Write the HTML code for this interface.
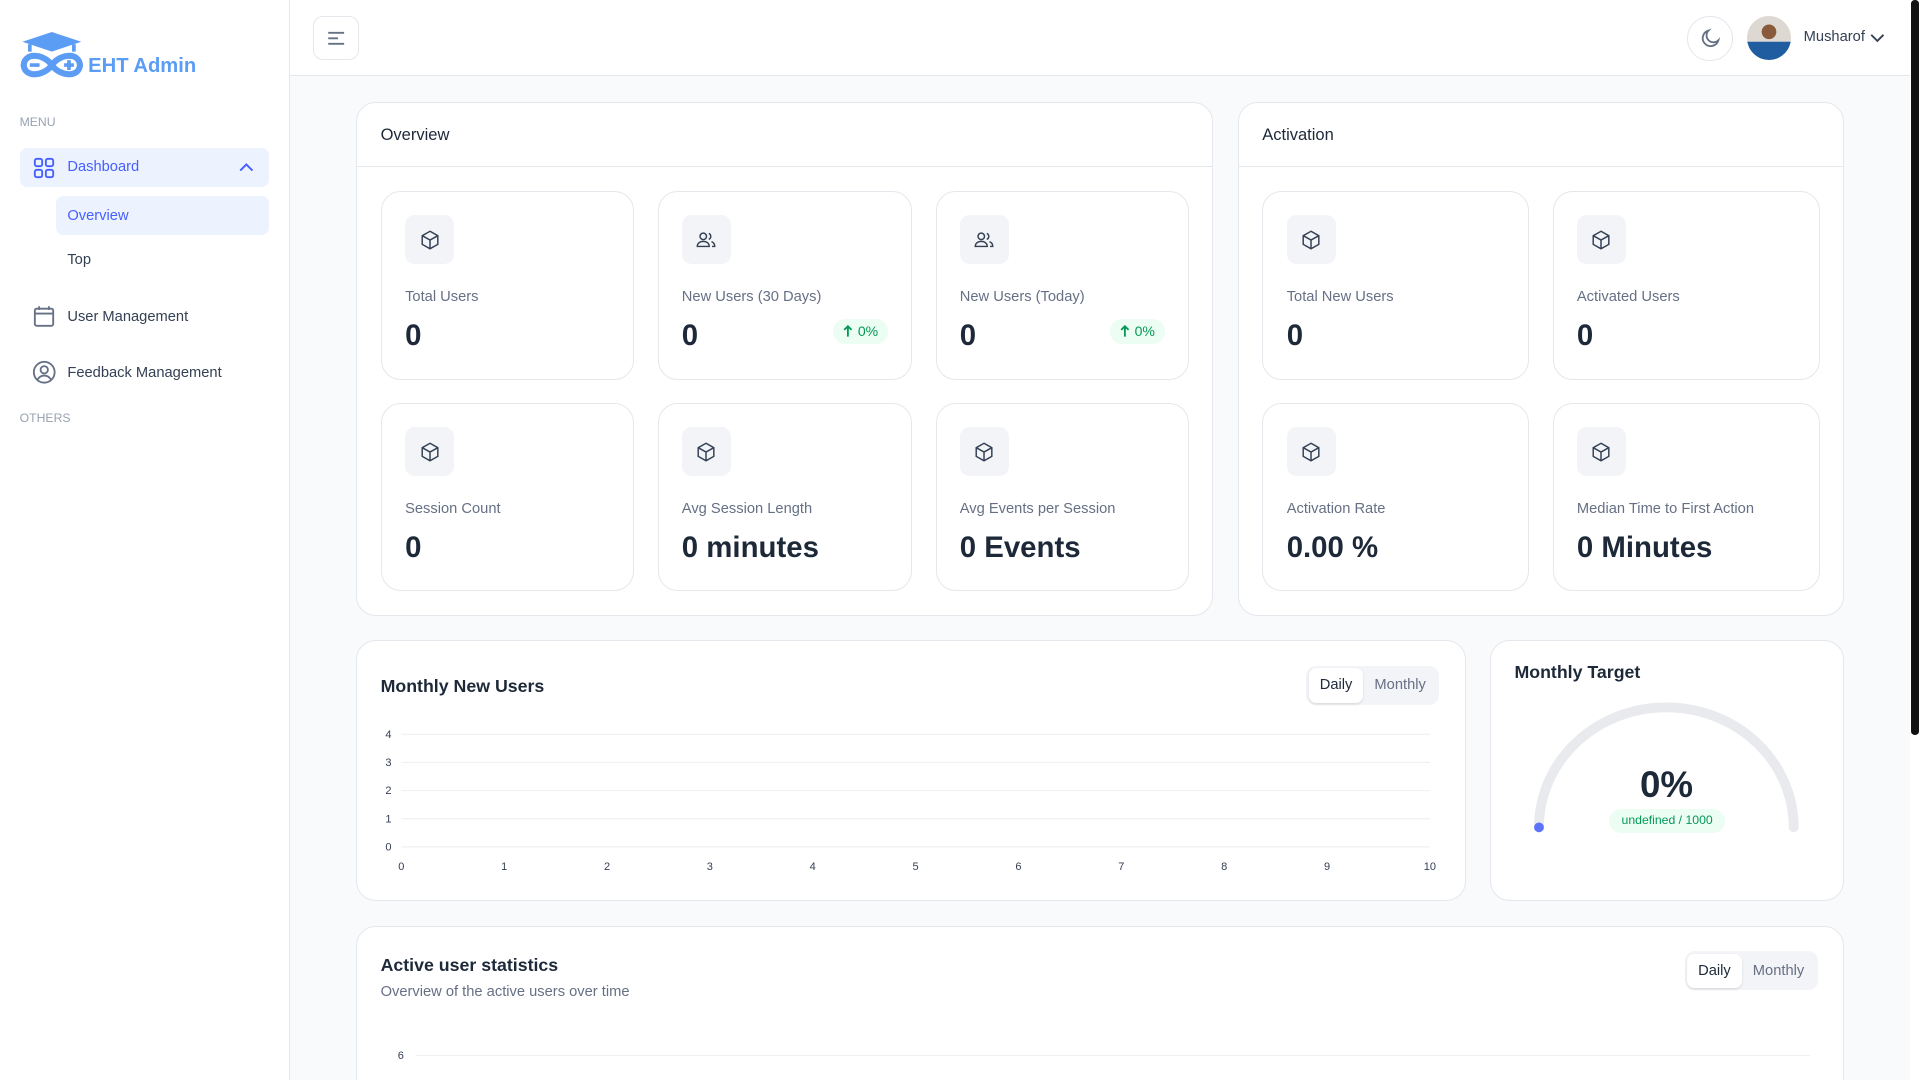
<!DOCTYPE html>
<html><head><meta charset="utf-8"><style>
*{box-sizing:border-box;margin:0;padding:0}
html,body{width:1920px;height:1080px;overflow:hidden;background:#f9fafb}
#r{zoom:1.2244898;width:1568px;height:882px;position:relative;font-family:"Liberation Sans",sans-serif;color:#344054;background:#f9fafb;overflow:hidden}
.a{position:absolute}
.sb{left:0;top:0;width:237px;height:882px;background:#fff;border-right:1px solid #e4e7ec}
.card{position:absolute;background:#fff;border:1px solid #e4e7ec;border-radius:16px}
.ic{position:absolute;left:19px;top:19px;width:40px;height:40px;border-radius:8px;background:#f2f4f7;display:flex;align-items:center;justify-content:center}
.lbl{position:absolute;left:19px;top:79px;font-size:12px;color:#667085}
.val{position:absolute;left:19px;top:104px;font-size:24px;font-weight:bold;color:#1d2939}
.bd{position:absolute;right:19px;top:104px;height:20px;padding:0 8px;border-radius:10px;background:#ecfdf3;color:#039855;font-size:11.5px;line-height:20px;display:flex;align-items:center;gap:4px}
.nav{position:absolute;font-size:12px;color:#344054}
.tg{position:absolute;height:32px;background:#f2f4f7;border-radius:8px;padding:2px;display:flex;font-size:12px}
.tg span{padding:0 9px;line-height:28px;color:#667085}
.tg span.on{background:#fff;color:#1d2939;border-radius:6px;box-shadow:0 1px 2px rgba(0,0,0,.1)}
</style></head><body><div id="r">
<div class="a sb">
 <svg class="a" style="left:16px;top:26px" width="52" height="42" viewBox="0 0 52 42">
  <polygon points="26,0 50,8 26,16 2,8" fill="#5b9cf5"/>
  <path d="M8 10v6 M44 10v6" stroke="#5b9cf5" stroke-width="3"/>
  <path d="M26 27 C20 18,4 16,3 27 C4 38,20 36,26 27 C32 18,48 16,49 27 C48 38,32 36,26 27Z" fill="none" stroke="#5b9cf5" stroke-width="5"/>
  <path d="M8 27h8 M36 27h8 M40 23v8" stroke="#5b9cf5" stroke-width="3"/>
 </svg>
 <div class="a" style="left:72px;top:45px;font-size:16.5px;font-weight:bold;color:#5b9cf5">EHT Admin</div>
 <div class="a" style="left:16px;top:94px;font-size:10px;color:#98a2b3">MENU</div>
 <div class="a" style="left:16px;top:121px;width:204px;height:32px;border-radius:6px;background:#ecf3ff"></div>
 <svg class="a" style="left:27px;top:128px" width="18" height="18" viewBox="0 0 18 18" fill="none" stroke="#465fff" stroke-width="1.5"><rect x="1.5" y="1.5" width="6" height="6" rx="1.5"/><rect x="10.5" y="1.5" width="6" height="6" rx="1.5"/><rect x="1.5" y="10.5" width="6" height="6" rx="1.5"/><rect x="10.5" y="10.5" width="6" height="6" rx="1.5"/></svg>
 <div class="nav" style="left:55px;top:130px;color:#465fff">Dashboard</div>
 <svg class="a" style="left:195px;top:132px" width="12" height="10" viewBox="0 0 12 10" fill="none" stroke="#465fff" stroke-width="1.6"><path d="M1 7l5-5 5 5"/></svg>
 <div class="a" style="left:46px;top:160px;width:174px;height:32px;border-radius:6px;background:#ecf3ff"></div>
 <div class="nav" style="left:55px;top:170px;color:#465fff">Overview</div>
 <div class="nav" style="left:55px;top:206px">Top</div>
 <svg class="a" style="left:27px;top:249px" width="18" height="18" viewBox="0 0 18 18" fill="none" stroke="#667085" stroke-width="1.5"><rect x="1.5" y="3" width="15" height="14" rx="1.5"/><path d="M1.5 7h15 M5 1v3 M13 1v3"/></svg>
 <div class="nav" style="left:55px;top:252px">User Management</div>
 <svg class="a" style="left:26px;top:294px" width="20" height="20" viewBox="0 0 20 20" fill="none" stroke="#667085" stroke-width="1.5"><circle cx="10" cy="10" r="8.5"/><circle cx="10" cy="8" r="3"/><path d="M4.5 16c1.5-2.5 3.5-3.3 5.5-3.3s4 .8 5.5 3.3"/></svg>
 <div class="nav" style="left:55px;top:298px">Feedback Management</div>
 <div class="a" style="left:16px;top:336px;font-size:10px;color:#98a2b3">OTHERS</div>
</div>
<div class="a" style="left:237px;top:0;width:1323px;height:62px;background:#fff;border-bottom:1px solid #e4e7ec"></div>
<div class="a" style="left:256px;top:13px;width:37px;height:36px;border:1px solid #e4e7ec;border-radius:8px"></div>
<svg class="a" style="left:267px;top:25px" width="16" height="12" viewBox="0 0 16 12" stroke="#667085" stroke-width="1.5"><path d="M1 1.5h13 M1 6h8 M1 10.5h13"/></svg>
<div class="a" style="left:1378px;top:13px;width:37px;height:37px;border:1px solid #e4e7ec;border-radius:50%"></div>
<svg class="a" style="left:1388px;top:23px" width="17" height="17" viewBox="0 0 17 17" fill="none" stroke="#667085" stroke-width="1.5"><path d="M7 2a6.5 6.5 0 1 0 8 8A5.5 5.5 0 0 1 7 2z"/></svg>
<div class="a" style="left:1427px;top:13px;width:36px;height:36px;border-radius:50%;background:radial-gradient(circle at 50% 36%,#8a5a3c 0 20%,transparent 21%),linear-gradient(#ddd9d2 0 58%,#1f5da0 59%)"></div>
<div class="a" style="left:1473px;top:24px;font-size:12px;color:#344054">Musharof</div>
<svg class="a" style="left:1527px;top:27px" width="12" height="8" viewBox="0 0 12 8" fill="none" stroke="#344054" stroke-width="1.5"><path d="M1 1.5l5 5 5-5"/></svg>
<div class="a" style="left:1560px;top:0;width:8px;height:882px;background:#fff"></div>
<div class="a" style="left:1561px;top:0;width:6px;height:600px;background:#111;border-radius:3px"></div>

<div class="card" style="left:291px;top:83px;width:700px;height:420px">
 <div class="a" style="left:19px;top:18px;font-size:13.5px;color:#1d2939">Overview</div>
 <div class="a" style="left:0;top:52px;width:698px;border-top:1px solid #e4e7ec"></div>
</div>
<div class="card" style="left:1011px;top:83px;width:495px;height:420px">
 <div class="a" style="left:19px;top:18px;font-size:13.5px;color:#1d2939">Activation</div>
 <div class="a" style="left:0;top:52px;width:493px;border-top:1px solid #e4e7ec"></div>
</div>
<div class="card" style="left:311px;top:156px;width:207px;height:154px"><div class="ic"><svg width="18" height="18" viewBox="0 0 24 24" fill="none" stroke="#344054" stroke-width="1.6"><path d="M12 2.5l8.5 4.8v9.4L12 21.5l-8.5-4.8V7.3z M3.5 7.3L12 12l8.5-4.7 M12 12v9.5"/></svg></div><div class="lbl">Total Users</div><div class="val">0</div></div>
<div class="card" style="left:537px;top:156px;width:208px;height:154px"><div class="ic"><svg width="18" height="18" viewBox="0 0 24 24" fill="none" stroke="#344054" stroke-width="1.6"><circle cx="9" cy="8" r="3.5"/><path d="M2.5 19c0-3.5 3-5.5 6.5-5.5s6.5 2 6.5 5.5z"/><path d="M15 4.8a3.5 3.5 0 0 1 0 6.5 M18 13.8c2 .7 3.5 2.5 3.5 5.2h-3"/></svg></div><div class="lbl">New Users (30 Days)</div><div class="val">0</div><div class="bd"><svg width="8" height="10" viewBox="0 0 8 10" fill="none" stroke="#039855" stroke-width="1.5"><path d="M4 9.5V1 M1 4l3-3 3 3"/></svg>0%</div></div>
<div class="card" style="left:764px;top:156px;width:207px;height:154px"><div class="ic"><svg width="18" height="18" viewBox="0 0 24 24" fill="none" stroke="#344054" stroke-width="1.6"><circle cx="9" cy="8" r="3.5"/><path d="M2.5 19c0-3.5 3-5.5 6.5-5.5s6.5 2 6.5 5.5z"/><path d="M15 4.8a3.5 3.5 0 0 1 0 6.5 M18 13.8c2 .7 3.5 2.5 3.5 5.2h-3"/></svg></div><div class="lbl">New Users (Today)</div><div class="val">0</div><div class="bd"><svg width="8" height="10" viewBox="0 0 8 10" fill="none" stroke="#039855" stroke-width="1.5"><path d="M4 9.5V1 M1 4l3-3 3 3"/></svg>0%</div></div>
<div class="card" style="left:311px;top:329px;width:207px;height:154px"><div class="ic"><svg width="18" height="18" viewBox="0 0 24 24" fill="none" stroke="#344054" stroke-width="1.6"><path d="M12 2.5l8.5 4.8v9.4L12 21.5l-8.5-4.8V7.3z M3.5 7.3L12 12l8.5-4.7 M12 12v9.5"/></svg></div><div class="lbl">Session Count</div><div class="val">0</div></div>
<div class="card" style="left:537px;top:329px;width:208px;height:154px"><div class="ic"><svg width="18" height="18" viewBox="0 0 24 24" fill="none" stroke="#344054" stroke-width="1.6"><path d="M12 2.5l8.5 4.8v9.4L12 21.5l-8.5-4.8V7.3z M3.5 7.3L12 12l8.5-4.7 M12 12v9.5"/></svg></div><div class="lbl">Avg Session Length</div><div class="val">0 minutes</div></div>
<div class="card" style="left:764px;top:329px;width:207px;height:154px"><div class="ic"><svg width="18" height="18" viewBox="0 0 24 24" fill="none" stroke="#344054" stroke-width="1.6"><path d="M12 2.5l8.5 4.8v9.4L12 21.5l-8.5-4.8V7.3z M3.5 7.3L12 12l8.5-4.7 M12 12v9.5"/></svg></div><div class="lbl">Avg Events per Session</div><div class="val">0 Events</div></div>
<div class="card" style="left:1031px;top:156px;width:218px;height:154px"><div class="ic"><svg width="18" height="18" viewBox="0 0 24 24" fill="none" stroke="#344054" stroke-width="1.6"><path d="M12 2.5l8.5 4.8v9.4L12 21.5l-8.5-4.8V7.3z M3.5 7.3L12 12l8.5-4.7 M12 12v9.5"/></svg></div><div class="lbl">Total New Users</div><div class="val">0</div></div>
<div class="card" style="left:1268px;top:156px;width:218px;height:154px"><div class="ic"><svg width="18" height="18" viewBox="0 0 24 24" fill="none" stroke="#344054" stroke-width="1.6"><path d="M12 2.5l8.5 4.8v9.4L12 21.5l-8.5-4.8V7.3z M3.5 7.3L12 12l8.5-4.7 M12 12v9.5"/></svg></div><div class="lbl">Activated Users</div><div class="val">0</div></div>
<div class="card" style="left:1031px;top:329px;width:218px;height:154px"><div class="ic"><svg width="18" height="18" viewBox="0 0 24 24" fill="none" stroke="#344054" stroke-width="1.6"><path d="M12 2.5l8.5 4.8v9.4L12 21.5l-8.5-4.8V7.3z M3.5 7.3L12 12l8.5-4.7 M12 12v9.5"/></svg></div><div class="lbl">Activation Rate</div><div class="val">0.00 %</div></div>
<div class="card" style="left:1268px;top:329px;width:218px;height:154px"><div class="ic"><svg width="18" height="18" viewBox="0 0 24 24" fill="none" stroke="#344054" stroke-width="1.6"><path d="M12 2.5l8.5 4.8v9.4L12 21.5l-8.5-4.8V7.3z M3.5 7.3L12 12l8.5-4.7 M12 12v9.5"/></svg></div><div class="lbl">Median Time to First Action</div><div class="val">0 Minutes</div></div>

<div class="card" style="left:291px;top:523px;width:906px;height:213px">
 <div class="a" style="left:19px;top:28px;font-size:14.5px;font-weight:bold;color:#1d2939">Monthly New Users</div>
 <div class="tg" style="left:775px;top:20px"><span class="on">Daily</span><span>Monthly</span></div>
</div>
<svg class="a" style="left:291px;top:590px" width="906" height="130" font-family="Liberation Sans" font-size="9" fill="#344054">
 <g stroke="#f0f1f3"><path d="M37 10h840 M37 33h840 M37 56h840 M37 79h840 M37 102h840"/></g>
 <text x="24" y="13">4</text><text x="24" y="36">3</text><text x="24" y="59">2</text><text x="24" y="82">1</text><text x="24" y="105">0</text>
 <g text-anchor="middle"><text x="37" y="121">0</text><text x="121" y="121">1</text><text x="205" y="121">2</text><text x="289" y="121">3</text><text x="373" y="121">4</text><text x="457" y="121">5</text><text x="541" y="121">6</text><text x="625" y="121">7</text><text x="709" y="121">8</text><text x="793" y="121">9</text><text x="877" y="121">10</text></g>
</svg>
<div class="card" style="left:1217px;top:523px;width:289px;height:213px">
 <div class="a" style="left:19px;top:17px;font-size:14.5px;font-weight:bold;color:#1d2939">Monthly Target</div>
</div>
<svg class="a" style="left:1217px;top:523px" width="289" height="213">
 <path d="M40 153 A104 98 0 0 1 248 153" fill="none" stroke="#e9eaee" stroke-width="8" stroke-linecap="round"/>
 <circle cx="40" cy="153" r="4" fill="#5d73f9"/>
</svg>
<div class="a" style="left:1301px;top:624px;width:120px;text-align:center;font-size:30px;font-weight:bold;color:#1d2939">0%</div>
<div class="a" style="left:1314px;top:661px;width:95px;height:19px;border-radius:10px;background:#ecfdf3;color:#039855;font-size:10px;line-height:19px;text-align:center">undefined / 1000</div>

<div class="card" style="left:291px;top:756px;width:1215px;height:140px">
 <div class="a" style="left:19px;top:23px;font-size:14.5px;font-weight:bold;color:#1d2939">Active user statistics</div>
 <div class="a" style="left:19px;top:47px;font-size:12px;color:#667085">Overview of the active users over time</div>
 <div class="tg" style="left:1084px;top:20px"><span class="on">Daily</span><span>Monthly</span></div>
 <div class="a" style="left:33px;top:101px;font-size:9px;color:#344054">6</div>
 <div class="a" style="left:48px;top:105px;width:1138px;border-top:1px solid #f0f1f3"></div>
</div>
</div></body></html>
